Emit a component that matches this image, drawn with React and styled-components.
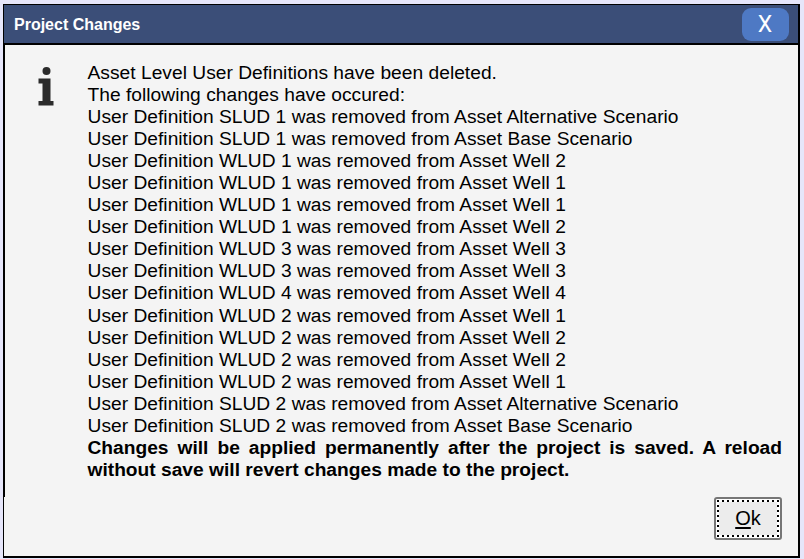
import React from 'react';
import styled, { createGlobalStyle } from 'styled-components';

const GlobalStyle = createGlobalStyle`
  body {
    margin: 0;
    background-color: #e6e6fa;
    font-family: "Liberation Sans", Arial, sans-serif;
    color: #000;
    overflow: hidden;
  }
`;

const Dialog = styled.section`
  box-sizing: border-box;
  display: flex;
  flex-direction: column;
  width: 797px;
  height: 554px;
  margin: 4px 0 0 3px;
  border: solid #000;
  border-width: 1px 2px 2px 1px;
  background-color: #f4f4f4;
`;

const TitleBar = styled.header`
  display: flex;
  align-items: center;
  justify-content: space-between;
  height: 38px;
  padding: 0 9px 0 10px;
  border-bottom: 2px solid #000;
  background-color: #3b4e78;
`;

const Title = styled.h1`
  margin: 0;
  padding-top: 1px;
  font-size: 16px;
  font-weight: bold;
  color: #fff;
`;

const CloseButton = styled.button`
  width: 47px;
  height: 33px;
  padding: 0 1px 0 0;
  border: 0;
  border-radius: 9px;
  background-color: #4e79c4;
  color: #fff;
  font-family: Roboto, sans-serif;
  font-size: 23px;
  line-height: 33px;
`;

const Body = styled.div`
  box-sizing: border-box;
  display: flex;
  height: 452px;
  padding: 16.85px 16px 0 33px;
  border-left: 1px solid #000;
`;

const InfoIcon = styled.svg`
  flex: none;
  width: 16px;
  height: 40px;
  margin: 5.15px 33.5px 0 0;
`;

const Message = styled.div`
  flex: 1;
  font-size: 19.2px;
  line-height: 22.06px;
  letter-spacing: 0.02px;
`;

const Line = styled.p`
  margin: 0;
  white-space: nowrap;
`;

const Warning = styled.p`
  margin: 0;
  font-weight: bold;
  letter-spacing: 0;
  text-align: justify;
`;

const Footer = styled.footer`
  display: flex;
  justify-content: flex-end;
  padding-right: 16px;
`;

const OkButton = styled.button`
  box-sizing: border-box;
  width: 68px;
  height: 43px;
  padding: 1px;
  border: 2px solid #767676;
  border-radius: 3px;
  background-color: #fff;
  color: #000;
  font-family: inherit;
  font-size: 20px;
`;

// square dots along the four edges, over a white margin
const FocusRing = styled.span`
  box-sizing: border-box;
  display: flex;
  height: 100%;
  padding: 2px;
  background-color: #fff;
  background-image:
    repeating-linear-gradient(90deg, #000 0 2px, #fff 2px 5px),
    repeating-linear-gradient(90deg, #000 0 2px, #fff 2px 5px),
    repeating-linear-gradient(#000 0 2px, #fff 2px 5px),
    repeating-linear-gradient(#000 0 2px, #fff 2px 5px);
  background-position: top, bottom, left, right;
  background-repeat: no-repeat;
  background-size: 100% 2px, 100% 2px, 2px 100%, 2px 100%;
`;

const ButtonFace = styled.span`
  flex: 1;
  display: flex;
  align-items: center;
  justify-content: center;
  background-color: #ececec;
`;

const AccessKey = styled.span`
  text-decoration: underline;
  text-decoration-thickness: 2px;
  text-underline-offset: 2px;
`;

const removals = [
  ['SLUD 1', 'Alternative Scenario'],
  ['SLUD 1', 'Base Scenario'],
  ['WLUD 1', 'Well 2'],
  ['WLUD 1', 'Well 1'],
  ['WLUD 1', 'Well 1'],
  ['WLUD 1', 'Well 2'],
  ['WLUD 3', 'Well 3'],
  ['WLUD 3', 'Well 3'],
  ['WLUD 4', 'Well 4'],
  ['WLUD 2', 'Well 1'],
  ['WLUD 2', 'Well 2'],
  ['WLUD 2', 'Well 2'],
  ['WLUD 2', 'Well 1'],
  ['SLUD 2', 'Alternative Scenario'],
  ['SLUD 2', 'Base Scenario'],
];

const App = () => (
  <>
    <GlobalStyle />
    <Dialog role="dialog">
      <TitleBar>
        <Title>Project Changes</Title>
        <CloseButton>X</CloseButton>
      </TitleBar>
      <Body>
        <InfoIcon viewBox="0 0 16 40" fill="#2b2b2b">
          <circle cx="8.5" cy="4" r="4" />
          <path d="M.5 11.500h12v22.500h3v4.500h-15v-4.500h4v-17.500h-4z" />
        </InfoIcon>
        <Message>
          <Line>Asset Level User Definitions have been deleted.</Line>
          <Line>The following changes have occured:</Line>
          {removals.map(([definition, asset], i) => (
            <Line key={i}>{`User Definition ${definition} was removed from Asset ${asset}`}</Line>
          ))}
          <Warning>
            Changes will be applied permanently after the project is saved. A reload
            without save will revert changes made to the project.
          </Warning>
        </Message>
      </Body>
      <Footer>
        <OkButton>
          <FocusRing>
            <ButtonFace><AccessKey>O</AccessKey>k</ButtonFace>
          </FocusRing>
        </OkButton>
      </Footer>
    </Dialog>
  </>
);

export default App;
